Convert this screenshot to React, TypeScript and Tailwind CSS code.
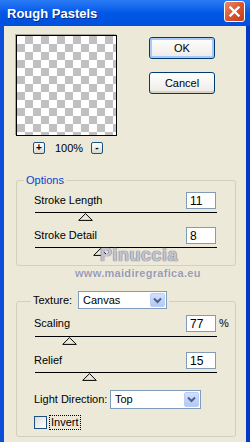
const font = "font-['Liberation_Sans',Arial,sans-serif]";

function Field({ value }: { value: string }) {
  return (
    <div className="flex h-[17px] w-[30px] items-center border border-[#7f9db9] bg-white pl-[3px] text-[12px] leading-none text-black">
      {value}
    </div>
  );
}

function Slider({ pos }: { pos: number }) {
  return (
    <div className="relative ml-[18px] h-[15px] w-[182px] border-t border-black">
      <svg
        className="absolute top-0"
        style={{ left: pos - 7 }}
        width="15"
        height="8"
        viewBox="0 0 15 8"
      >
        <polygon points="7.5,0.6 14.3,7.4 0.7,7.4" fill="#ece9d8" stroke="#000" strokeWidth="1" />
      </svg>
    </div>
  );
}

function Row({ label, value, unit }: { label: string; value: string; unit?: string }) {
  return (
    <div className={`flex h-[17px] items-center pl-[17px] ${unit ? "pr-[8px]" : "pr-[19px]"}`}>
      <span className="flex-1 text-[11px] text-black">{label}</span>
      <Field value={value} />
      {unit && <span className="ml-[3px] w-[8px] text-[11px] text-black">{unit}</span>}
    </div>
  );
}

function Select({ value, width }: { value: string; width: string }) {
  return (
    <div className={`flex h-full items-stretch border border-[#7f9db9] bg-white ${width}`}>
      <span className="flex flex-1 items-center pl-[4px] text-[11px] text-black">{value}</span>
      <span className="m-[1px] flex w-[15px] items-center justify-center rounded-[2px] border border-[#b9cdf6] bg-gradient-to-b from-[#d3e0fd] to-[#b3c8f5]">
        <svg width="9" height="7" viewBox="0 0 9 7">
          <path d="M1 1.5 L4.5 5 L8 1.5" fill="none" stroke="#4d6185" strokeWidth="2" />
        </svg>
      </span>
    </div>
  );
}

function XpButton({ label, isDefault }: { label: string; isDefault?: boolean }) {
  return (
    <div
      className={`flex h-[22px] w-[66px] items-center justify-center rounded-[3px] border border-[#003c74] bg-gradient-to-b from-white to-[#ecebe6] text-[11px] text-black ${
        isDefault ? "shadow-[inset_0_0_0_2px_#a9c8f5]" : "shadow-[inset_0_-2px_0_#d6d0c5]"
      }`}
    >
      {label}
    </div>
  );
}

function ZoomButton({ glyph }: { glyph: string }) {
  return (
    <div className="flex h-[12px] w-[12px] items-center justify-center rounded-[2px] border border-[#1c5180] bg-gradient-to-b from-white to-[#dcd9cf] text-[10px] font-bold leading-none text-black">
      {glyph}
    </div>
  );
}

export default function App() {
  return (
    <div className={`relative flex h-[442px] w-[250px] flex-col overflow-hidden ${font}`}>
      <div className="flex h-[26px] shrink-0 justify-between bg-gradient-to-b from-[#2a7bf5] via-[#0058e6] to-[#0050dc] pl-[7px] pr-[5px]">
        <span className="mt-[4px] text-[13px] font-bold text-white [text-shadow:1px_1px_0_#0a2a8a]">
          Rough Pastels
        </span>
        <div className="mt-[1px] flex h-[21px] w-[21px] items-center justify-center rounded-[3px] border border-white bg-gradient-to-br from-[#ec8a66] via-[#db5530] to-[#c23c18]">
          <svg width="11" height="11" viewBox="0 0 11 11">
            <path d="M1.5 1.5 L9.5 9.5 M9.5 1.5 L1.5 9.5" stroke="#fff" strokeWidth="2.4" strokeLinecap="square" />
          </svg>
        </div>
      </div>

      <div className="flex-1 border-x-4 border-l-[#0b4fd8] border-r-[#0638c8] bg-[#ece9d8]">
        <div className="flex pl-[12px] pt-[9px]">
          <div className="w-[101px]">
            <div className="h-[101px] w-[101px] border border-black bg-[conic-gradient(#c0c0c0_25%,#fff_0_50%,#c0c0c0_0_75%,#fff_0)] bg-[length:16px_16px] shadow-[-1px_-1px_0_#a8a697]" />
            <div className="mt-[6px] flex h-[12px] items-center pl-[17px]">
              <ZoomButton glyph="+" />
              <span className="ml-[10px] w-[36px] text-[11px] leading-none text-black">100%</span>
              <ZoomButton glyph="-" />
            </div>
          </div>
          <div className="ml-[32px] mt-[2px] flex flex-col gap-[13px]">
            <XpButton label="OK" isDefault />
            <XpButton label="Cancel" />
          </div>
        </div>

        <div className="relative ml-[12px] mt-[26px] h-[86px] w-[220px] rounded-[3px] border border-[#d0d0bf]">
          <span className="absolute left-[7px] top-[-8px] bg-[#ece9d8] px-[2px] text-[11px] leading-[14px] text-[#0046d5]">
            Options
          </span>
          <div className="mt-[11px]">
            <Row label="Stroke Length" value="11" />
            <div className="mt-[3px]">
              <Slider pos={50} />
            </div>
            <Row label="Stroke Detail" value="8" />
            <div className="mt-[3px]">
              <Slider pos={65} />
            </div>
          </div>
        </div>

        <div className="relative ml-[12px] mt-[35px] h-[136px] w-[220px] rounded-[3px] border border-[#d0d0bf]">
          <div className="absolute left-[14px] top-[-11px] flex h-[18px] items-center bg-[#ece9d8] px-[2px]">
            <span className="w-[45px] text-[11px] text-black">Texture:</span>
            <Select value="Canvas" width="w-[89px]" />
          </div>
          <div className="mt-[13px]">
            <Row label="Scaling" value="77" unit="%" />
            <div className="mt-[4px]">
              <Slider pos={34} />
            </div>
            <div className="mt-[1px]">
              <Row label="Relief" value="15" />
            </div>
            <div className="mt-[3px]">
              <Slider pos={54} />
            </div>
            <div className="mt-[3px] flex h-[19px] items-center pl-[17px]">
              <span className="w-[76px] text-[11px] text-black">Light Direction:</span>
              <Select value="Top" width="w-[91px]" />
            </div>
            <div className="mt-[6px] flex h-[15px] items-center pl-[17px]">
              <div className="h-[13px] w-[13px] border border-[#1c5180] bg-gradient-to-br from-[#dcdcd7] to-white" />
              <span className="ml-[2px] border border-dotted border-black px-[1px] text-[11px] leading-[13px] text-black">
                Invert
              </span>
            </div>
          </div>
        </div>
      </div>

      <div className="pointer-events-none absolute left-[100px] top-[245px] flex flex-col items-center">
        <span className="text-[18px] font-bold leading-[20px] tracking-[0.5px] text-[#c4c4d2] [text-shadow:0_0_1px_#6a6a80,0_0_1px_#6a6a80]">
          Pinuccia
        </span>
      </div>
      <span className="pointer-events-none absolute left-[75px] top-[267px] text-[11px] font-bold leading-[13px] tracking-[0.3px] text-[#9a9ab0] [text-shadow:0_0_1px_#ffffff]">
        www.maidiregrafica.eu
      </span>
    </div>
  );
}
